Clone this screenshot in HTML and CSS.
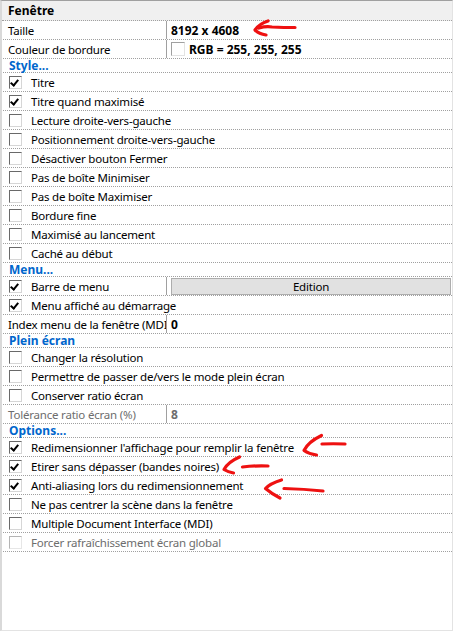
FILE: index.html
```html
<!DOCTYPE html>
<html lang="fr">
<head>
<meta charset="utf-8">
<title>Propriétés fenêtre</title>
<link rel="stylesheet" href="styles.css">
</head>
<body>
<div class="grid">
  <div class="row head">Fenêtre</div>
  <div class="row prop"><div class="name">Taille</div><div class="val"><b>8192 x 4608</b></div></div>
  <div class="row prop"><div class="name">Couleur de bordure</div><div class="val"><span class="swatch"></span><b>RGB = 255, 255, 255</b></div></div>
  <div class="row cat">Style...</div>
  <div class="row chk"><span class="cb on"></span>Titre</div>
  <div class="row chk"><span class="cb on"></span>Titre quand maximisé</div>
  <div class="row chk"><span class="cb"></span>Lecture droite-vers-gauche</div>
  <div class="row chk"><span class="cb"></span>Positionnement droite-vers-gauche</div>
  <div class="row chk"><span class="cb"></span>Désactiver bouton Fermer</div>
  <div class="row chk"><span class="cb"></span>Pas de boîte Minimiser</div>
  <div class="row chk"><span class="cb"></span>Pas de boîte Maximiser</div>
  <div class="row chk"><span class="cb"></span>Bordure fine</div>
  <div class="row chk"><span class="cb"></span>Maximisé au lancement</div>
  <div class="row chk"><span class="cb"></span>Caché au début</div>
  <div class="row cat">Menu...</div>
  <div class="row prop"><div class="name chkname"><span class="cb on"></span>Barre de menu</div><div class="val"><span class="btn">Edition</span></div></div>
  <div class="row chk"><span class="cb on"></span>Menu affiché au démarrage</div>
  <div class="row prop"><div class="name">Index menu de la fenêtre (MDI)</div><div class="val"><b>0</b></div></div>
  <div class="row cat">Plein écran</div>
  <div class="row chk"><span class="cb"></span>Changer la résolution</div>
  <div class="row chk"><span class="cb"></span>Permettre de passer de/vers le mode plein écran</div>
  <div class="row chk"><span class="cb"></span>Conserver ratio écran</div>
  <div class="row prop dis"><div class="name">Tolérance ratio écran (%)</div><div class="val"><b>8</b></div></div>
  <div class="row cat">Options...</div>
  <div class="row chk"><span class="cb on"></span>Redimensionner l'affichage pour remplir la fenêtre</div>
  <div class="row chk"><span class="cb on"></span>Etirer sans dépasser (bandes noires)</div>
  <div class="row chk"><span class="cb on"></span>Anti-aliasing lors du redimensionnement</div>
  <div class="row chk"><span class="cb"></span>Ne pas centrer la scène dans la fenêtre</div>
  <div class="row chk"><span class="cb"></span>Multiple Document Interface (MDI)</div>
  <div class="row chk dis"><span class="cb"></span>Forcer rafraîchissement écran global</div>
</div>
<svg class="marks" width="455" height="632" viewBox="0 0 455 632">
  <g fill="none" stroke="#ee1111" stroke-width="3.2" stroke-linecap="round" stroke-linejoin="round">
    <path d="M268 21 Q259 24 255 30 Q259 34 266 35"/>
    <path d="M259 28 Q266 26 272 27 Q284 27.5 295 27.5"/>
    <path d="M321.5 435.5 Q308 442 304 450.5 Q309 454 316.5 455"/>
    <path d="M322 444 Q333 443.5 345 444"/>
    <path d="M239.5 457 Q228 462 224 469.5 Q228 472 233.5 473"/>
    <path d="M242.5 467 Q255 465.5 268 466"/>
    <path d="M281.5 480 Q270 483.5 265.5 488.5 Q272 494 280 498"/>
    <path d="M284 488.5 Q304 489 323 491"/>
  </g>
</svg>
</body>
</html>
```
FILE: styles.css
```css
html, body {
  margin: 0;
  padding: 0;
  background: #ffffff;
}

body {
  position: relative;
  width: 455px;
  height: 632px;
  overflow: hidden;
  font-family: "Noto Sans", "Open Sans", sans-serif;
  font-size: 11.5px;
  letter-spacing: -0.2px;
  color: #000000;
}

.grid {
  box-sizing: border-box;
  width: 453px;
  height: 631px;
  border-top: 1px solid #a0a0a0;
  border-left: 2px solid #d9d9d9;
  border-right: 1px solid #e3e3e3;
  border-bottom: 1px solid #e3e3e3;
  padding-left: 1px;
  display: flex;
  flex-direction: column;
}

.row {
  box-sizing: border-box;
  height: 19px;
  flex: none;
  display: flex;
  align-items: center;
  border-bottom: 1px dotted #a0a0a0;
  white-space: nowrap;
}

.head {
  height: 20px;
  background: #f0f0f0;
  font-weight: bold;
  font-size: 12px;
  letter-spacing: 0;
  margin-left: -1px;
  padding-left: 6px;
}

.cat {
  height: 14px;
  color: #0066cc;
  font-weight: bold;
  font-size: 12px;
  letter-spacing: 0;
  padding-left: 6px;
  line-height: 12px;
}

.chk {
  padding-left: 6px;
}

.prop .name {
  box-sizing: border-box;
  width: 164px;
  height: 100%;
  flex: none;
  display: flex;
  align-items: center;
  padding-left: 5px;
  border-right: 1px solid #a0a0a0;
  overflow: hidden;
}

.prop .name.chkname {
  padding-left: 6px;
}

.prop .val {
  flex: 1;
  height: 100%;
  display: flex;
  align-items: center;
  padding-left: 4px;
  padding-right: 1px;
}

.prop .val b {
  font-size: 12px;
  letter-spacing: 0;
}

.dis {
  color: #6d6d6d;
}

.cb {
  box-sizing: border-box;
  width: 13px;
  height: 13px;
  flex: none;
  margin-right: 9px;
  background: #ffffff;
  border-top: 1px solid #696969;
  border-left: 1px solid #696969;
  border-right: 1px solid #d6d6d6;
  border-bottom: 1px solid #d6d6d6;
  position: relative;
}

.dis .cb {
  border-top-color: #b4b4b4;
  border-left-color: #b4b4b4;
  border-right-color: #e6e6e6;
  border-bottom-color: #e6e6e6;
}

.cb.on::after {
  content: "";
  position: absolute;
  left: 2px;
  top: 1px;
  width: 3px;
  height: 6px;
  border-right: 2px solid #000;
  border-bottom: 2px solid #000;
  transform: rotate(40deg);
  transform-origin: center;
}

.swatch {
  box-sizing: border-box;
  width: 14px;
  height: 14px;
  flex: none;
  margin-right: 4px;
  background: #ffffff;
  border-top: 1px solid #a0a0a0;
  border-left: 1px solid #a0a0a0;
  border-right: 1px solid #e3e3e3;
  border-bottom: 1px solid #e3e3e3;
}

.btn {
  box-sizing: border-box;
  flex: 1;
  height: 17px;
  background: #e1e1e1;
  border: 1px solid #adadad;
  display: flex;
  align-items: center;
  justify-content: center;
}

.marks {
  position: absolute;
  left: 0;
  top: 0;
  pointer-events: none;
}
```
